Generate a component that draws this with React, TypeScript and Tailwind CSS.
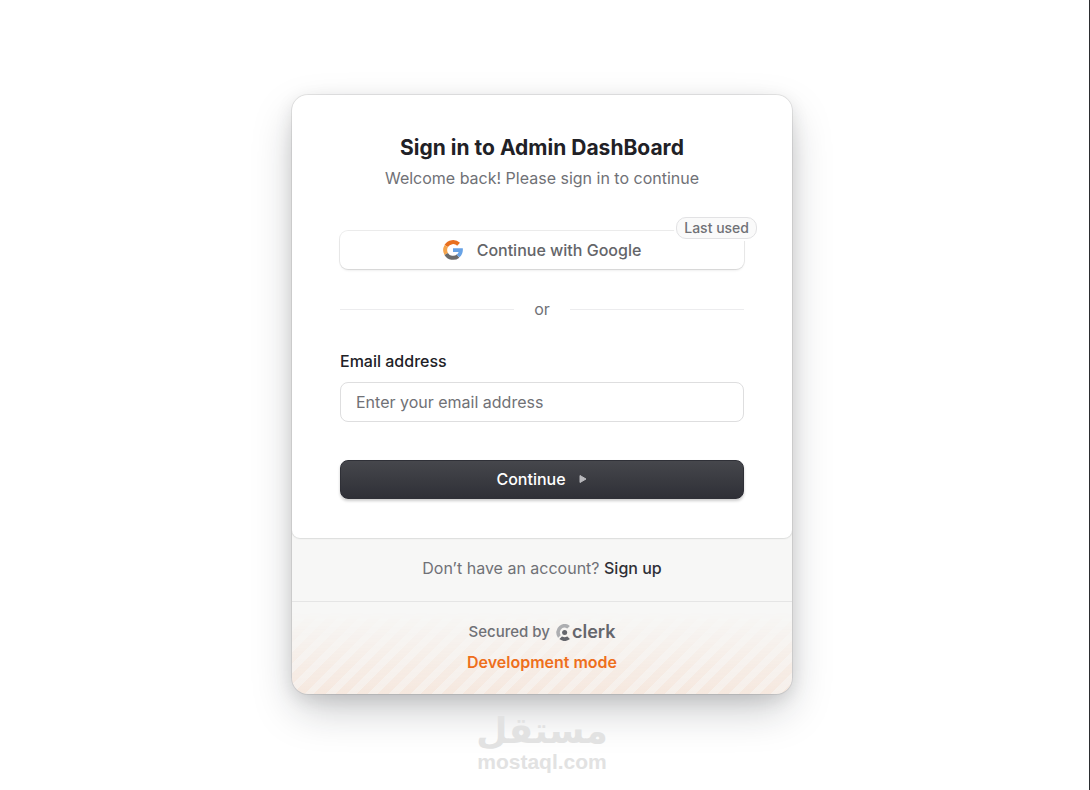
function GoogleIcon() {
  return (
    <svg className="h-5 w-5" viewBox="0 0 20 20" fill="none" strokeWidth="4" aria-hidden="true">
      <path d="M3.2 6.1 A8 8 0 0 1 15.6 4.3" stroke="#e8701f" />
      <path d="M3.2 13.9 A8 8 0 0 1 3.2 6.1" stroke="#f5a44c" />
      <path d="M15.1 16.1 A8 8 0 0 1 3.2 13.9" stroke="#6b6b6b" />
      <path d="M10 8.2 H19.8 C20.2 11.8 19.1 15 16.6 17.3 L13.4 14.8 C14.6 14.1 15.3 13.2 15.6 12.1 H10 Z" fill="#68a3e6" />
    </svg>
  );
}

function ClerkIcon() {
  return (
    <svg className="h-[17px] w-[14px]" viewBox="2 0 20 24" aria-hidden="true">
      <path
        d="m21.472 3.161-2.88 2.88a.569.569 0 0 1-.701.084A6.857 6.857 0 0 0 8.724 8.08a6.862 6.862 0 0 0-1.222 3.692 6.86 6.86 0 0 0 .978 3.764.573.573 0 0 1-.083.699l-2.881 2.88a.567.567 0 0 1-.864-.063A11.993 11.993 0 0 1 6.771 2.7a11.99 11.99 0 0 1 14.637-.405.566.566 0 0 1 .232.418.57.57 0 0 1-.168.448Z"
        fill="#adaeb1"
      />
      <path
        d="m21.47 20.829-2.881-2.881a.572.572 0 0 0-.7-.084 6.854 6.854 0 0 1-7.081 0 .576.576 0 0 0-.7.084l-2.881 2.881a.576.576 0 0 0-.103.69.57.57 0 0 0 .166.186 12 12 0 0 0 14.113 0 .58.58 0 0 0 .239-.423.576.576 0 0 0-.172-.453Z"
        fill="#65666c"
      />
      <circle cx="14.355" cy="11.995" r="3.6" fill="#65666c" />
    </svg>
  );
}

export default function App() {
  return (
    <main className="min-h-screen border-r border-[#2b2d30] bg-white pt-[95px] pr-[5px] font-['Inter','Liberation_Sans',sans-serif] text-base text-[#707176]">
      <div className="mx-auto w-full max-w-[500px] overflow-hidden rounded-2xl bg-[#f7f7f6] shadow-[0_5px_18px_rgba(0,0,0,0.1),0_18px_44px_-5px_rgba(25,28,33,0.26),0_0_0_1px_rgba(0,0,0,0.08)]">
        {/* Sign in form */}
        <form
          className="rounded-b-lg bg-white px-12 pt-[41px] pb-[39px] shadow-[0_0_2px_rgba(0,0,0,0.08),0_1px_2px_rgba(25,28,33,0.06),0_0_0_1px_rgba(0,0,0,0.03)]"
          onSubmit={(e) => e.preventDefault()}
        >
          <div className="text-center">
            <h1 className="text-[21px] leading-6 font-bold text-[#212126]">Sign in to Admin DashBoard</h1>
            <p className="mt-1.5 leading-6">Welcome back! Please sign in to continue</p>
          </div>

          <div className="relative mt-[41px]">
            <button
              type="button"
              className="flex h-[38px] w-full items-center justify-center gap-3.5 rounded-lg pb-px font-medium text-[#646569] shadow-[0_0_0_1px_rgba(0,0,0,0.08),0_2px_3px_-1px_rgba(0,0,0,0.12)]"
            >
              <GoogleIcon />
              Continue with Google
            </button>
            <span className="absolute -top-[14px] -right-[13px] rounded-[10px] border border-[#e2e2e4] bg-[#fafafa] px-[7px] text-[14px] leading-5 font-medium ring-2 ring-white">
              Last used
            </span>
          </div>

          {/* Divider */}
          <div className="mt-7 flex items-center gap-5">
            <div className="h-px flex-1 bg-[#ececee]" />
            <span className="leading-6">or</span>
            <div className="h-px flex-1 bg-[#ececee]" />
          </div>

          <label htmlFor="email" className="mt-7 block leading-6 font-medium text-[#212126]">
            Email address
          </label>
          <input
            id="email"
            type="email"
            placeholder="Enter your email address"
            className="mt-[9px] h-10 w-full rounded-lg border border-[#dededf] bg-white px-[15px] text-[#212126] placeholder:text-[#707176]"
          />

          <button
            type="submit"
            className="mt-[38px] flex h-[39px] w-full items-center justify-center gap-3 rounded-lg border border-[#2f3037] bg-linear-to-b from-[#46474c] to-[#2f3037] pb-px font-medium text-white shadow-[0_2px_3px_rgba(0,0,0,0.2)]"
          >
            Continue
            <svg className="h-2.5 w-2.5" viewBox="0 0 10 10" aria-hidden="true">
              <path d="M2 1.5 L8 5 L2 8.5 Z" fill="#b9b9bd" stroke="#b9b9bd" strokeLinejoin="round" />
            </svg>
          </button>
        </form>

        {/* Footer */}
        <p className="pt-[18px] pb-[21px] text-center leading-6">
          Don’t have an account?{" "}
          <a href="#signup" className="font-medium text-[#2f3037]">
            Sign up
          </a>
        </p>
        <div className="relative border-t border-[#e5e5e5] pt-[18px] pb-5 text-center">
          <div className="absolute inset-0 bg-[repeating-linear-gradient(-45deg,rgba(243,107,22,0.1),rgba(243,107,22,0.1)_8px,rgba(243,107,22,0.05)_8px,rgba(243,107,22,0.05)_15px)] mask-[linear-gradient(transparent_10%,black)]" />
          <div className="relative flex items-center justify-center gap-1.5 leading-6">
            <span className="text-[15px] font-medium">Secured by</span>
            <a href="#clerk" className="flex items-center gap-0.5 text-[18px] font-semibold text-[#65666c]">
              <ClerkIcon />
              clerk
            </a>
          </div>
          <p className="relative mt-1.5 leading-6 font-semibold text-[#ee6f1c]">Development mode</p>
        </div>
      </div>

      {/* Watermark */}
      <div className="relative mt-4 text-center font-bold text-[#e2e2e2]">
        <p dir="rtl" className="font-['DejaVu_Sans',sans-serif] text-[36px] leading-[42px]">
          مستقل
        </p>
        <p className="font-['Liberation_Sans',sans-serif] text-[21px] leading-5">mostaql.com</p>
      </div>
    </main>
  );
}
